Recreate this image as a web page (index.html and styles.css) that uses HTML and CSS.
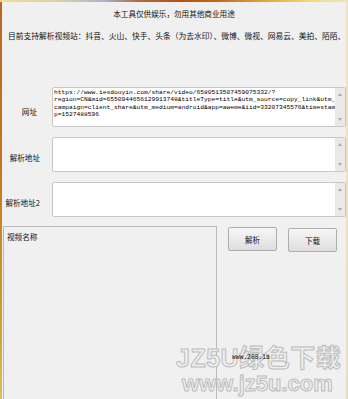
FILE: index.html
```html
<!DOCTYPE html>
<html lang="zh-CN">
<head>
  <meta charset="UTF-8">
  <meta name="viewport" content="width=device-width, initial-scale=1.0">
  <title>视频解析</title>
  <link rel="stylesheet" href="styles.css">
</head>
<body>

  <div class="window">
    <div class="client">
      <!-- 说明文字 -->
      <p class="notice">本工具仅供娱乐，勿用其他商业用途</p>
      <p class="sites">目前支持解析视频站：抖音、火山、快手、头条（为去水印）、微博、微视、网易云、美拍、陌陌、</p>

      <!-- 输入框 -->
      <div class="form">
        <label class="label label-url">网址</label>
        <div class="field field-tall">
          <div class="field-text">https://www.iesdouyin.com/share/video/6580513507459075332/?
region=CN&amp;mid=6550944656129913748&amp;titleType=title&amp;utm_source=copy_link&amp;utm_
campaign=client_share&amp;utm_medium=android&amp;app=aweme&amp;iid=33207345576&amp;timestam
p=1527488596</div>
          <div class="scrollbar"><span class="arrow-up"></span><span class="arrow-down"></span></div>
        </div>

        <label class="label">解析地址</label>
        <div class="field">
          <div class="field-text"></div>
          <div class="scrollbar"><span class="arrow-up"></span><span class="arrow-down"></span></div>
        </div>

        <label class="label">解析地址2</label>
        <div class="field">
          <div class="field-text"></div>
          <div class="scrollbar"><span class="arrow-up"></span><span class="arrow-down"></span></div>
        </div>
      </div>

      <!-- 下方区域 -->
      <div class="bottom">
        <div class="name-box">视频名称</div>
        <div class="actions">
          <div class="buttons">
            <button class="btn btn-parse">解析</button>
            <button class="btn btn-download">下载</button>
          </div>
          <p class="site">www.208.1a</p>
        </div>
      </div>
    </div>

    <!-- 水印 -->
    <div class="watermark">
      <div class="wm-big">JZ5U绿色下载</div>
      <div class="wm-small">www.jz5u.com</div>
    </div>
  </div>

</body>
</html>
```

FILE: styles.css
```css
/* 기본 */
body {
  margin: 0;
  font-family: "Noto Sans CJK SC", "Liberation Sans", sans-serif;
  color: #111;
  background-color: #f0f0f0;
}

.window {
  position: relative;
  width: 348px;
  height: 399px;
  box-sizing: border-box;
  padding: 2px 2px 0 2px;
  overflow: hidden;
  background:
    linear-gradient(90deg, #f3dc8a 0%, #d9cfae 18%, #aab2c8 30%, #b06a3a 40%, #b4500e 52%, #c0661c 62%, #e2b040 78%, #f4dc80 90%, #ece4c0 100%) top left / 100% 2px no-repeat,
    linear-gradient(180deg, #b8662a 0%, #c4761c 40%, #c8a030 80%, #d8c060 100%) top left / 2px 100% no-repeat,
    linear-gradient(180deg, #ece4c0 0%, #e4dcc0 100%) top right / 2px 100% no-repeat,
    #f0f0f0;
}

.client {
  height: 100%;
  background-color: #f0f0f0;
  display: flex;
  flex-direction: column;
}

.notice {
  margin: 7px 0 0 0;
  font-size: 7.6px;
  line-height: 10px;
  text-align: center;
}

.sites {
  margin: 12px 0 0 6px;
  font-size: 7.75px;
  line-height: 10px;
  white-space: nowrap;
}

/* 입력 영역 */
.form {
  margin-top: 46px;
  display: grid;
  grid-template-columns: 38px 1fr;
  column-gap: 12px;
  row-gap: 10px;
}

.label {
  font-size: 7.6px;
  line-height: 10px;
  text-align: right;
  align-self: center;
  padding-top: 6px;
}

.label-url {
  padding-top: 10px;
  padding-right: 3px;
}

.field {
  display: flex;
  height: 35px;
  box-sizing: border-box;
  border: 1px solid #c8c8c8;
  border-radius: 2px;
  background-color: #fff;
}

.field-tall {
  height: 40px;
}

.field-text {
  flex: 1;
  padding: 1px 0 0 1px;
  font-family: "Liberation Mono", monospace;
  font-size: 6.25px;
  line-height: 7.4px;
  white-space: pre;
  overflow: hidden;
  color: #000;
}

.scrollbar {
  width: 10px;
  background-color: #e9e9e9;
  display: flex;
  flex-direction: column;
  justify-content: space-between;
  align-items: center;
  padding: 5px 0 5px 0;
}

.arrow-up {
  width: 0;
  height: 0;
  border-left: 2.5px solid transparent;
  border-right: 2.5px solid transparent;
  border-bottom: 3px solid #a8a8a8;
}

.arrow-down {
  width: 0;
  height: 0;
  border-left: 2.5px solid transparent;
  border-right: 2.5px solid transparent;
  border-top: 3px solid #a8a8a8;
}

/* 하단 */
.bottom {
  margin-top: 9px;
  flex: 1;
  display: flex;
}

.name-box {
  margin-left: 1px;
  width: 214px;
  box-sizing: border-box;
  border: 1px solid #b9b9b9;
  border-bottom: none;
  padding: 5px 0 0 3px;
  font-size: 7.6px;
  line-height: 10px;
}

.actions {
  padding-left: 11px;
  display: flex;
  flex-direction: column;
}

.buttons {
  display: flex;
  align-items: flex-start;
  gap: 11px;
}

.btn {
  width: 49px;
  height: 24px;
  padding: 0;
  border: 1px solid #adadad;
  border-radius: 2px;
  background: linear-gradient(180deg, #f6f6f6 0%, #ebebeb 50%, #dddddd 100%);
  font-family: "Noto Sans CJK SC", "Liberation Sans", sans-serif;
  font-size: 7.6px;
  color: #111;
}

.btn-parse {
  margin-top: 1px;
}

.btn-download {
  margin-top: 2px;
}

.site {
  position: relative;
  z-index: 2;
  margin: 102px 0 0 4px;
  font-family: "Liberation Mono", monospace;
  font-size: 6.3px;
  line-height: 8px;
}

/* 워터마크 */
.watermark {
  position: absolute;
  left: 176px;
  top: 343px;
  z-index: 1;
  font-family: "Liberation Sans", "Noto Sans CJK SC", sans-serif;
  font-weight: bold;
  color: #eeeeee;
  -webkit-text-stroke: 1px #bdbdbd;
  pointer-events: none;
}

.wm-big {
  font-size: 25px;
  line-height: 30px;
  letter-spacing: 0.5px;
  white-space: nowrap;
}

.wm-small {
  margin-left: 6px;
  font-size: 22px;
  line-height: 22px;
  white-space: nowrap;
}
```
